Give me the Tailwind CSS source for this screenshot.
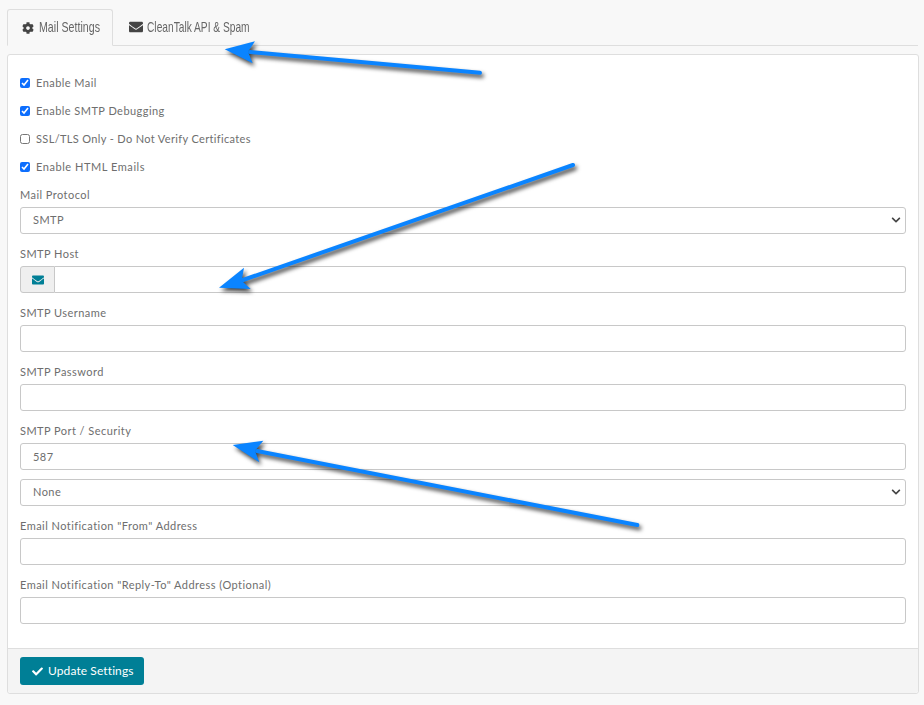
<!DOCTYPE html>
<html lang="en">

<head>
    <meta charset="UTF-8">
    <title>Mail Settings</title>
    <script src="https://cdn.jsdelivr.net/npm/@tailwindcss/browser@4"></script>
</head>

<body class="relative h-[705px] overflow-hidden bg-[#f8f8f8] font-['Lato','Open_Sans',sans-serif] text-[11px] text-[#6e6e6e]">
    <div class="px-[7px] pt-[9px]">
        <!-- tabs -->
        <div class="flex h-[37px] w-[911px] border-b border-[#dedede]">
            <div class="-mb-px flex h-[37px] w-[106px] items-center rounded-t-[3px] border border-b-[#f8f8f8] border-[#dedede] pl-[14px]">
                <svg class="mr-[5px] size-[12px] shrink-0 fill-[#444]" viewBox="0 0 512 512"><path d="M487.4 315.7l-42.6-24.6c4.3-23.2 4.3-47 0-70.2l42.6-24.6c4.9-2.8 7.1-8.6 5.5-14-11.1-35.6-30-67.8-54.7-94.6-3.8-4.1-10-5.1-14.8-2.3L380.8 110c-17.9-15.4-38.5-27.3-60.8-35.1V25.8c0-5.6-3.9-10.5-9.4-11.7-36.7-8.2-74.3-7.8-109.2 0-5.5 1.2-9.4 6.1-9.4 11.7V75c-22.2 7.9-42.8 19.8-60.8 35.1L88.7 85.5c-4.9-2.8-11-1.9-14.8 2.3-24.7 26.7-43.6 58.9-54.7 94.6-1.7 5.4.6 11.2 5.5 14L67.3 221c-4.3 23.2-4.3 47 0 70.2l-42.6 24.6c-4.9 2.8-7.1 8.6-5.5 14 11.1 35.6 30 67.8 54.7 94.6 3.8 4.1 10 5.1 14.8 2.3l42.6-24.6c17.9 15.4 38.5 27.3 60.8 35.1v49.2c0 5.6 3.9 10.5 9.4 11.7 36.7 8.2 74.3 7.8 109.2 0 5.5-1.2 9.4-6.1 9.4-11.7v-49.2c22.2-7.9 42.8-19.8 60.8-35.1l42.6 24.6c4.9 2.8 11 1.9 14.8-2.3 24.7-26.7 43.6-58.9 54.7-94.6 1.5-5.5-.7-11.3-5.6-14.1zM256 336c-44.1 0-80-35.9-80-80s35.9-80 80-80 80 35.9 80 80-35.9 80-80 80z"/></svg>
                <span class="origin-left scale-x-[0.71] font-['Liberation_Sans',sans-serif] text-[15px] whitespace-nowrap text-[#666]">Mail Settings</span>
            </div>
            <div class="flex h-[36px] items-center pl-[16px]">
                <svg class="mr-[4px] size-[14px] shrink-0 fill-[#444]" viewBox="0 0 512 512"><path d="M502.3 190.8c3.9-3.1 9.7-.2 9.7 4.7V400c0 26.5-21.5 48-48 48H48c-26.5 0-48-21.5-48-48V195.6c0-5 5.7-7.8 9.7-4.7 22.4 17.4 52.1 39.5 154.1 113.6 21.1 15.4 56.7 47.8 92.2 47.6 35.7.3 72-32.8 92.3-47.6 102-74.1 131.6-96.3 154-113.7zM256 320c23.2.4 56.6-29.2 73.4-41.4 132.7-96.3 142.8-104.7 173.4-128.7 5.8-4.5 9.2-11.5 9.2-18.9v-19c0-26.5-21.5-48-48-48H48C21.5 64 0 85.5 0 112v19c0 7.4 3.4 14.3 9.2 18.9 30.6 23.9 40.7 32.4 173.4 128.7 16.8 12.2 50.2 41.8 73.4 41.4z"/></svg>
                <span class="origin-left scale-x-[0.68] font-['Liberation_Sans',sans-serif] text-[15px] whitespace-nowrap text-[#666]">CleanTalk API &amp; Spam</span>
            </div>
        </div>

        <!-- card -->
        <div class="mt-2 h-[640px] w-[912px] rounded-[3px] border border-[#dedede] bg-white">
            <div class="h-[593px] px-3 pt-[19px] tracking-[0.45px]">
                <label class="mb-[10px] flex h-[18px] items-center"><input type="checkbox" checked class="mr-[6px] size-[10px] accent-[#0d6efd]">Enable Mail</label>
                <label class="mb-[10px] flex h-[18px] items-center"><input type="checkbox" checked class="mr-[6px] size-[10px] accent-[#0d6efd]">Enable SMTP Debugging</label>
                <label class="mb-[10px] flex h-[18px] items-center tracking-[0.35px]"><input type="checkbox" class="mr-[6px] size-[10px] accent-[#0d6efd]">SSL/TLS Only - Do Not Verify Certificates</label>
                <label class="mb-[10px] flex h-[18px] items-center tracking-[0.55px]"><input type="checkbox" checked class="mr-[6px] size-[10px] accent-[#0d6efd]">Enable HTML Emails</label>

                <div class="mb-[3px] h-[18px] leading-[18px]">Mail Protocol</div>
                <div class="relative mb-[11px]">
                    <select class="h-[27px] w-full appearance-none rounded-[3px] border border-[#c8c8c8] bg-white pl-3 text-[11px]"><option>SMTP</option></select>
                    <svg class="absolute top-[8px] right-[5px] size-[10px] fill-[#444]" viewBox="0 0 448 512"><path d="M207.029 381.476L12.686 187.132c-9.373-9.373-9.373-24.569 0-33.941l22.667-22.667c9.357-9.357 24.522-9.375 33.901-.04L224 284.505l154.745-154.021c9.379-9.335 24.544-9.317 33.901.04l22.667 22.667c9.373 9.373 9.373 24.569 0 33.941L240.971 381.476c-9.373 9.372-24.569 9.372-33.942 0z"/></svg>
                </div>

                <div class="mb-[3px] h-[18px] leading-[18px]">SMTP Host</div>
                <div class="mb-[11px] flex h-[27px]">
                    <div class="flex w-[35px] items-center justify-center rounded-l-[3px] border border-[#c8c8c8] bg-[#efefef]">
                        <svg class="size-[12px] fill-[#007f96]" viewBox="0 0 512 512"><path d="M502.3 190.8c3.9-3.1 9.7-.2 9.7 4.7V400c0 26.5-21.5 48-48 48H48c-26.5 0-48-21.5-48-48V195.6c0-5 5.7-7.8 9.7-4.7 22.4 17.4 52.1 39.5 154.1 113.6 21.1 15.4 56.7 47.8 92.2 47.6 35.7.3 72-32.8 92.3-47.6 102-74.1 131.6-96.3 154-113.7zM256 320c23.2.4 56.6-29.2 73.4-41.4 132.7-96.3 142.8-104.7 173.4-128.7 5.8-4.5 9.2-11.5 9.2-18.9v-19c0-26.5-21.5-48-48-48H48C21.5 64 0 85.5 0 112v19c0 7.4 3.4 14.3 9.2 18.9 30.6 23.9 40.7 32.4 173.4 128.7 16.8 12.2 50.2 41.8 73.4 41.4z"/></svg>
                    </div>
                    <input type="text" class="min-w-0 flex-1 rounded-r-[3px] border border-l-0 border-[#c8c8c8] pl-3">
                </div>

                <div class="mb-[3px] h-[18px] leading-[18px]">SMTP Username</div>
                <input type="text" class="mb-[11px] block h-[27px] w-full rounded-[3px] border border-[#c8c8c8] pl-3">

                <div class="mb-[3px] h-[18px] leading-[18px]">SMTP Password</div>
                <input type="text" class="mb-[11px] block h-[27px] w-full rounded-[3px] border border-[#c8c8c8] pl-3">

                <div class="mb-[3px] h-[18px] leading-[18px]">SMTP Port / Security</div>
                <input type="text" value="587" class="mb-[9px] block h-[27px] w-full rounded-[3px] border border-[#c8c8c8] pl-3">
                <div class="relative mb-[11px]">
                    <select class="h-[27px] w-full appearance-none rounded-[3px] border border-[#c8c8c8] bg-white pl-3 text-[11px]"><option>None</option></select>
                    <svg class="absolute top-[8px] right-[5px] size-[10px] fill-[#444]" viewBox="0 0 448 512"><path d="M207.029 381.476L12.686 187.132c-9.373-9.373-9.373-24.569 0-33.941l22.667-22.667c9.357-9.357 24.522-9.375 33.901-.04L224 284.505l154.745-154.021c9.379-9.335 24.544-9.317 33.901.04l22.667 22.667c9.373 9.373 9.373 24.569 0 33.941L240.971 381.476c-9.373 9.372-24.569 9.372-33.942 0z"/></svg>
                </div>

                <div class="mb-[3px] h-[18px] leading-[18px]">Email Notification "From" Address</div>
                <input type="text" class="mb-[11px] block h-[27px] w-full rounded-[3px] border border-[#c8c8c8] pl-3">

                <div class="mb-[3px] h-[18px] leading-[18px]">Email Notification "Reply-To" Address (Optional)</div>
                <input type="text" class="block h-[27px] w-full rounded-[3px] border border-[#c8c8c8] pl-3">
            </div>

            <!-- footer -->
            <div class="h-[45px] rounded-b-[3px] border-t border-[#dedede] bg-[#f4f4f4] px-3 pt-2">
                <button class="flex h-[28px] w-[124px] items-center rounded-[3px] bg-[#007f96] pl-3 text-[12px] tracking-[0.1px] text-white">
                    <svg class="mr-[5px] size-[11px] fill-white" viewBox="0 0 512 512"><path d="M173.898 439.404l-166.4-166.4c-9.997-9.997-9.997-26.206 0-36.204l36.203-36.204c9.997-9.998 26.207-9.998 36.204 0L192 312.69 432.095 72.596c9.997-9.997 26.207-9.997 36.204 0l36.203 36.204c9.997 9.997 9.997 26.206 0 36.204l-294.4 294.401c-9.998 9.997-26.207 9.997-36.204-.001z"/></svg>
                    Update Settings
                </button>
            </div>
        </div>
    </div>

    <!-- annotation arrows drawn over the page -->
    <svg class="pointer-events-none absolute inset-0 drop-shadow-[2px_3px_2px_rgba(0,0,0,0.75)]" width="924" height="705" viewBox="0 0 924 705">
        <g fill="#0a84ff" stroke="#0a84ff" stroke-linecap="round">
            <line x1="480" y1="72.7" x2="250" y2="52" stroke-width="4"/>
            <polygon points="224.7,49.3 255,41.3 248,51.7 252.7,63.3" stroke-width="0"/>
            <line x1="573" y1="165" x2="243" y2="280" stroke-width="4"/>
            <polygon points="219,287.7 244,267.7 241.7,280.7 250.7,289" stroke-width="0"/>
            <line x1="637.3" y1="525" x2="257" y2="451" stroke-width="4"/>
            <polygon points="232.7,445 263.3,440.7 255,450.7 259.3,462.3" stroke-width="0"/>
        </g>
    </svg>
</body>

</html>
